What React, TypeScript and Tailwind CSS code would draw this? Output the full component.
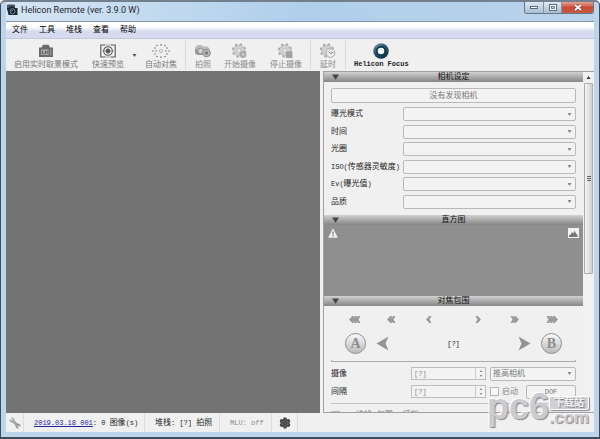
import React from 'react';
import { clsx } from 'clsx';
import { Settings } from 'lucide-react';

const CAMERA_SETTINGS = [
	'曝光模式',
	'时间',
	'光圈',
	'ISO(传感器灵敏度)',
	'Ev(曝光值)',
	'品质',
];

interface IconProps {
	className?: string;
}

// Latin letters are set one size below the Chinese ones
function Mixed({ children }: { children: string }) {
	return (
		<>
			{children.split(/([\x20-\x7e]+)/).map((part, i) =>
				i % 2 ? (
					<span key={i} className="text-[7px]">
						{part}
					</span>
				) : (
					part
				)
			)}
		</>
	);
}

function AppIcon() {
	return (
		<svg viewBox="0 0 12 12" className="size-3 shrink-0">
			<rect x="1" y="0.5" width="8" height="6" rx="1" fill="#46566a" />
			<path d="M1 4h2l1-1.5h4L9 4h2.500v7H2.500z" fill="#1b2633" />
			<circle cx="6.500" cy="7.200" r="2.500" fill="#0f1722" stroke="#8fa6bd" strokeWidth="0.800" />
			<circle cx="6" cy="6.700" r="0.800" fill="#7fa2c8" />
		</svg>
	);
}

function LiveViewIcon() {
	return (
		<svg viewBox="0 0 16 14" className="w-4 h-3.5">
			<path d="M1 3.500h2.500L5 .8h5.500L12 3.500h3V13H1z" fill="#6b6b6b" />
			<rect x="3" y="5.500" width="7.500" height="5.500" fill="#a9a9a9" />
			<path d="M4.500 7v2.500H6M7.500 7v3M9.300 7v2.500" stroke="#555" fill="none" />
			<rect x="12" y="5" width="1.500" height="6.500" fill="#8d8d8d" />
		</svg>
	);
}

function PreviewIcon() {
	return (
		<svg viewBox="0 0 16 14" className="w-4 h-3.5" fill="none" stroke="#555">
			<path d="M5 1H.8v12H5M11 1h4.200v12H11" strokeWidth="1.100" />
			<path d="M5 1h6M5 13h6" stroke="#aaa" />
			<circle cx="8" cy="7" r="4.300" strokeWidth="1.100" />
			<circle cx="8" cy="7" r="2.100" fill="#555" />
			<path d="M2.500 7h2M11.500 7h2" strokeWidth="0.600" />
		</svg>
	);
}

function AutoFocusIcon() {
	const dots = [
		[5, 1.5], [9, 0.900], [13, 1.500], [3, 4], [15, 4], [0.900, 7], [4, 7],
		[14, 7], [17.1, 7], [3, 10], [15, 10], [5, 12.5], [9, 13.100], [13, 12.5],
	];
	return (
		<svg viewBox="0 0 18 14" className="w-[18px] h-3.5">
			{dots.map(([x, y]) => (
				<circle key={`${x}-${y}`} cx={x} cy={y} r="0.800" fill="#777" />
			))}
			<circle cx="9" cy="7" r="1.600" fill="none" stroke="#aaa" strokeWidth="0.800" />
		</svg>
	);
}

function ShotIcon() {
	return (
		<svg viewBox="0 0 18 14" className="w-[18px] h-3.5">
			<path d="M1 3.500L3.500 1h4L9 2.500h4.500l2 2v4H1z" fill="#bbb" />
			<path d="M1 5h8v6H3L1 9z" fill="#9a9a9a" />
			<circle cx="6.500" cy="7" r="2.800" fill="#d4d4d4" stroke="#8d8d8d" />
			<circle cx="12.500" cy="9" r="3.800" fill="#bdbdbd" stroke="#8b8b8b" />
			<circle cx="12.500" cy="9" r="1.700" fill="#777" />
		</svg>
	);
}

function GearBadge({ kind }: { kind: 'play' | 'stop' | 'clock' }) {
	return (
		<svg viewBox="0 0 18 16" className="w-[18px] h-4">
			<circle
				cx="8"
				cy="7.500"
				r="6.300"
				fill="none"
				stroke="#aaa"
				strokeWidth="1.800"
				strokeDasharray="2.400 2.550"
			/>
			<circle cx="8" cy="7.500" r="5.400" fill="#d2d2d2" stroke="#adadad" strokeWidth="0.800" />
			<circle cx="8" cy="7.500" r="2.200" fill="#e4e4e4" stroke="#b8b8b8" strokeWidth="0.700" />
			{kind === 'play' && (
				<>
					<circle cx="12" cy="11.500" r="3.400" fill="#a9a9a9" />
					<path d="M11 9.600v3.800l3-1.900z" fill="#d0d0d0" />
				</>
			)}
			{kind === 'stop' && <rect x="9" y="8.500" width="6.500" height="6.500" rx="0.600" fill="#a3a3a3" />}
			{kind === 'clock' && (
				<>
					<circle cx="11.500" cy="10" r="4.400" fill="#ececec" stroke="#a8a8a8" />
					<path d="M9.500 8.500l2 2 2.500-1.300" fill="none" stroke="#777" />
				</>
			)}
		</svg>
	);
}

function FocusIcon() {
	return (
		<svg viewBox="0 0 18 18" className="size-4">
			<defs>
				<linearGradient id="lens" x1="0" y1="0" x2="0.600" y2="1">
					<stop offset="0" stopColor="#9db4c0" />
					<stop offset="0.350" stopColor="#3f6478" />
					<stop offset="1" stopColor="#0d3044" />
				</linearGradient>
			</defs>
			<circle cx="9" cy="9" r="8.700" fill="url(#lens)" />
			<circle cx="9" cy="9" r="5.600" fill="#123b50" />
			<circle cx="9" cy="9" r="3.700" fill="#f4f8fa" />
		</svg>
	);
}

function WrenchIcon() {
	return (
		<svg viewBox="0 0 12 12" className="size-3">
			<path d="M3.500 3.500l5 5" stroke="#a3a3a3" strokeWidth="2.600" />
			<circle cx="3" cy="3" r="2.500" fill="#a8a8a8" />
			<circle cx="9" cy="9" r="2.500" fill="#999" />
			<path d="M0 0l3 3M9 9l3 3" stroke="#f0f0f0" strokeWidth="1.600" />
		</svg>
	);
}

function DownArrow({ className }: IconProps) {
	return (
		<svg viewBox="0 0 8 6" className={clsx('shrink-0', className)} fill="currentColor">
			<path d="M0 0h8L4 6z" />
		</svg>
	);
}

interface ToolButtonProps {
	label: string;
	icon: React.ReactNode;
	className?: string;
}

const ToolButton: React.FC<ToolButtonProps> = ({ label, icon, className }) => {
	return (
		<button
			type="button"
			className={clsx(
				'flex flex-col items-center whitespace-nowrap',
				className ?? 'text-[#777]'
			)}
		>
			<span className="flex h-[18px] items-center">{icon}</span>
			<span className="leading-[9px]">{label}</span>
		</button>
	);
};

function ToolDivider() {
	return <div className="h-7 w-px bg-[#d8d8d8]" />;
}

function TitleBar() {
	return (
		<header className="flex h-[19px] shrink-0 items-start bg-linear-to-r from-[#d5e5f3] via-[#b0cfeb] to-[#b9d3ea]">
			<div className="flex h-4 flex-1 items-center gap-[3px]">
				<AppIcon />
				<h1 className="font-['Roboto','Noto_Sans',sans-serif] text-[9px] text-[#1c2530]">
					Helicon Remote (ver. 3.9.0 W)
				</h1>
			</div>
			<div className="flex h-3 overflow-hidden rounded-b-[3px] border border-t-0 border-[#64788d]">
				<button
					type="button"
					aria-label="Minimize"
					className="flex w-[19px] items-center justify-center border-r border-[#8193a8] bg-linear-to-b from-[#dfe9f3] to-[#a9bdd2]"
				>
					<svg viewBox="0 0 8 3" className="w-2 h-[3px]">
						<rect x="0.500" y="0.500" width="7" height="2" fill="#fff" stroke="#596b80" />
					</svg>
				</button>
				<button
					type="button"
					aria-label="Maximize"
					className="flex w-[18px] items-center justify-center border-r border-[#8193a8] bg-linear-to-b from-[#dfe9f3] to-[#a9bdd2]"
				>
					<svg viewBox="0 0 8 7" className="w-2 h-[7px]">
						<rect x="0.500" y="0.500" width="7" height="6" fill="#fff" stroke="#596b80" />
						<rect x="2.500" y="2.500" width="3" height="2" fill="#b9cbdc" stroke="#596b80" strokeWidth="0.800" />
					</svg>
				</button>
				<button
					type="button"
					aria-label="Close"
					className="flex w-[31px] items-center justify-center bg-linear-to-b from-[#e2a093] via-[#cb4a35] to-[#c55a43]"
				>
					<svg viewBox="0 0 8 7" className="w-2 h-[7px]">
						<path d="M1 1l6 5M7 1L1 6" stroke="#6b3a38" strokeWidth="2.800" />
						<path d="M1 1l6 5M7 1L1 6" stroke="#fff" strokeWidth="1.700" />
					</svg>
				</button>
			</div>
		</header>
	);
}

function MenuBar() {
	return (
		<nav className="flex h-[17px] shrink-0 items-center gap-[11px] border-b border-[#c4c8dc] bg-linear-to-b from-white from-30% to-[#d6daee] to-60% pl-1.5 text-black">
			{['文件', '工具', '堆栈', '查看', '帮助'].map((item) => (
				<button key={item} type="button">
					{item}
				</button>
			))}
		</nav>
	);
}

function Toolbar() {
	return (
		<div className="flex h-8 shrink-0 items-center bg-[#f0f0f0] pl-2">
			<ToolButton label="启用实时取景模式" icon={<LiveViewIcon />} />
			<ToolButton label="快速预览" icon={<PreviewIcon />} className="ml-3.5 text-[#777]" />
			<button type="button" aria-label="快速预览选项" className="ml-2 text-[#555]">
				<DownArrow className="w-[5px] h-[3px]" />
			</button>
			<ToolButton label="自动对焦" icon={<AutoFocusIcon />} className="mx-2 text-[#777]" />
			<ToolDivider />
			<ToolButton label="拍照" icon={<ShotIcon />} className="ml-2 text-[#888]" />
			<ToolButton label="开始摄像" icon={<GearBadge kind="play" />} className="ml-3 text-[#888]" />
			<ToolButton label="停止摄像" icon={<GearBadge kind="stop" />} className="ml-3.5 mr-2 text-[#888]" />
			<ToolDivider />
			<ToolButton label="延时" icon={<GearBadge kind="clock" />} className="mx-2 text-[#888]" />
			<ToolDivider />
			<ToolButton
				label="Helicon Focus"
				icon={<FocusIcon />}
				className="ml-2 text-[7px] font-bold text-[#222]"
			/>
		</div>
	);
}

function SectionHeader({ title }: { title: string }) {
	return (
		<button
			type="button"
			className="grid h-2.5 w-full shrink-0 grid-cols-[1fr_auto_1fr] items-center bg-linear-to-b from-[#d2d2d2] to-[#858585] px-2 text-[#111]"
		>
			<DownArrow className="h-1.5 w-[7px] text-[#444]" />
			<span className="leading-[10px]">{title}</span>
		</button>
	);
}

interface ComboProps {
	id?: string;
	label?: string;
	value?: string;
}

function Combo({ id, label, value = '' }: ComboProps) {
	return (
		<div className="grid flex-1 items-center">
			<select
				id={id}
				aria-label={label}
				className="col-start-1 row-start-1 h-3.5 w-full appearance-none rounded-[2px] border border-[#b9b9b9] bg-[#f3f3f3] px-0.5 text-[#777]"
			>
				<option>{value}</option>
			</select>
			<DownArrow className="pointer-events-none col-start-1 row-start-1 mr-1 h-[3px] w-[5px] justify-self-end text-[#888]" />
		</div>
	);
}

function CameraSection() {
	return (
		<div className="flex shrink-0 flex-col px-[7px] pt-1.5 pb-1.5">
			<button
				type="button"
				className="h-[15px] rounded-[2px] border border-[#b9b9b9] bg-[#f3f3f3] text-[#777]"
			>
				没有发现相机
			</button>
			<div className="mt-1 flex h-[102px] flex-col justify-between">
				{CAMERA_SETTINGS.map((name) => (
					<div key={name} className="flex items-center">
						<label htmlFor={name} className="w-[72px] whitespace-nowrap">
							<Mixed>{name}</Mixed>
						</label>
						<Combo id={name} />
					</div>
				))}
			</div>
		</div>
	);
}

function Histogram() {
	return (
		<div className="flex h-[71px] shrink-0 items-start justify-between bg-[#8f8f8f] px-1 pt-[3px]">
			<svg viewBox="0 0 10 10" className="size-2.5">
				<path d="M5 0.300L9.900 9.700H0.100z" fill="#efefef" />
				<path d="M5 3.500v3M5 7.300v1.200" stroke="#666" strokeWidth="1.100" />
			</svg>
			<svg viewBox="0 0 11 10" className="w-[11px] h-2.5">
				<rect width="11" height="10" fill="#f2f2f2" />
				<path d="M1 9V7.500l2-1.500 1-2 1.500 1.500 1-3 1.500 3L9.500 7v2z" fill="#777" />
			</svg>
		</div>
	);
}

function Chevrons({ count, back }: { count: number; back?: boolean }) {
	const width = 4 + count * 3;
	return (
		<button
			type="button"
			aria-label={`${back ? 'Back' : 'Forward'} ${count}`}
			className="flex w-3 items-center justify-center"
		>
			<svg
				viewBox={`0 0 ${width} 7`}
				style={{ width }}
				className={clsx('h-[7px] shrink-0', back && '-scale-x-100')}
				fill="#999"
			>
				{Array.from({ length: count }, (_, i) => (
					<path key={i} d="M0 0h2.200L5.500 3.500 2.200 7H0l2-3.500z" transform={`translate(${i * 3 + 0.500} 0)`} />
				))}
			</svg>
		</button>
	);
}

function RoundButton({ children }: { children: React.ReactNode }) {
	return (
		<button
			type="button"
			className="size-[21px] rounded-full border border-[#8e8e8e] bg-linear-to-b from-[#fafafa] to-[#bbb] text-center font-['Liberation_Serif',serif] text-[14px] leading-[19px] font-bold text-[#8c8c8c]"
		>
			{children}
		</button>
	);
}

function BigArrow({ back }: { back?: boolean }) {
	return (
		<button type="button" aria-label={back ? 'Step back' : 'Step forward'}>
			<svg viewBox="0 0 13 15" className={clsx('w-[13px] h-[15px]', back && '-scale-x-100')} fill="#949494">
				<path d="M0.500 0.500L12.500 7.500 0.500 14.500 3.500 7.500z" />
			</svg>
		</button>
	);
}

function SpinBox({ id }: { id: string }) {
	return (
		<div className="flex h-[13px] w-[75px] border border-[#bdbdbd] bg-[#f3f3f3]">
			<input
				id={id}
				defaultValue="[?]"
				className="w-0 flex-1 px-0.5 text-[7px] text-[#888]"
			/>
			<div className="flex w-2.5 flex-col items-center justify-center gap-[3px] border-l border-[#ccc] text-[#888]">
				<DownArrow className="h-0.5 w-1 rotate-180" />
				<DownArrow className="h-0.5 w-1" />
			</div>
		</div>
	);
}

function BracketingSection() {
	return (
		<div className="flex shrink-0 flex-col px-[7px] pt-2.5">
			<div className="flex justify-between pr-[18px] pl-[17px]">
				<div className="flex gap-[25px]">
					<Chevrons count={3} back />
					<Chevrons count={2} back />
					<Chevrons count={1} back />
				</div>
				<div className="flex gap-[25px]">
					<Chevrons count={1} />
					<Chevrons count={2} />
					<Chevrons count={3} />
				</div>
			</div>
			<div className="mt-2.5 flex items-center justify-between px-3.5">
				<div className="flex items-center gap-2.5">
					<RoundButton>A</RoundButton>
					<BigArrow back />
				</div>
				<span className="text-[7px]">[?]</span>
				<div className="flex items-center gap-2.5">
					<BigArrow />
					<RoundButton>B</RoundButton>
				</div>
			</div>
			<div className="mt-1.5 h-0.5 border-x border-b border-[#aaa]" />
			<div className="mt-1 flex h-[15px] items-center">
				<label htmlFor="shots" className="w-20">
					摄像
				</label>
				<SpinBox id="shots" />
				<div className="ml-1 flex flex-1">
					<Combo label="对焦方式" value="推高相机" />
				</div>
			</div>
			<div className="mt-[3px] flex h-[15px] items-center">
				<label htmlFor="interval" className="w-20">
					间隔
				</label>
				<SpinBox id="interval" />
				<label className="ml-1 flex flex-1 items-center gap-[3px] whitespace-nowrap text-[#888]">
					<input type="checkbox" className="size-[9px] appearance-none border border-[#b5b5b5] bg-[#f7f7f7]" />
					启动
				</label>
				<button
					type="button"
					className="h-3.5 w-[50px] rounded-[2px] border border-[#b9b9b9] bg-[#f3f3f3] text-[7px] text-[#777]"
				>
					DOF
				</button>
			</div>
			<div className="mt-1 h-px bg-[#c4c4c4]" />
			<label className="mt-1.5 flex items-center gap-4 text-[#888]">
				<input type="checkbox" className="size-[9px] appearance-none border border-[#b5b5b5] bg-[#f7f7f7]" />
				堆栈(包围) 模拟
			</label>
		</div>
	);
}

function ScrollBar() {
	return (
		<div className="flex w-[11px] shrink-0 flex-col items-center bg-[#f1f1f1]">
			<DownArrow className="my-1 h-[3px] w-[5px] shrink-0 rotate-180 text-[#333]" />
			<div className="flex h-[191px] w-[9px] flex-col items-center justify-center gap-px rounded-[1px] border border-[#ababab] bg-linear-to-r from-[#f6f6f6] to-[#cfcfd3]">
				<div className="h-px w-1 bg-[#666]" />
				<div className="h-px w-1 bg-[#666]" />
				<div className="h-px w-1 bg-[#666]" />
			</div>
		</div>
	);
}

function SidePanel() {
	return (
		<aside className="ml-[3px] flex w-[271px] shrink-0 overflow-hidden border border-r-0 border-[#a0a0a0] bg-[#f0f0f0]">
			<div className="flex min-w-0 flex-1 flex-col">
				<SectionHeader title="相机设定" />
				<CameraSection />
				<SectionHeader title="直方图" />
				<Histogram />
				<SectionHeader title="对焦包围" />
				<BracketingSection />
			</div>
			<ScrollBar />
		</aside>
	);
}

function StatusBar() {
	return (
		<footer className="flex h-[19px] shrink-0 items-center divide-x divide-[#dcdcdc] bg-[#f0f0f0] whitespace-pre *:flex *:h-full *:items-center">
			<div className="w-[18px] justify-center">
				<WrenchIcon />
			</div>
			<div className="w-[121px] pl-2.5">
				<a href="#session" className="text-[7px] text-[#22229c] underline">
					2019.03.18 001
				</a>
				<span>
					<Mixed>: 0 图像(s)</Mixed>
				</span>
			</div>
			<div className="w-[75px] pl-2.5">
				<span>
					<Mixed>堆栈: [?] 拍照</Mixed>
				</span>
			</div>
			<div className="w-[52px] pl-2.5 text-[7px] text-[#888]">MLU: off</div>
			<div className="w-[26px] justify-center">
				<Settings className="size-3 fill-[#666] text-[#444]" strokeWidth={3} />
			</div>
			<div className="w-5" />
		</footer>
	);
}

function Watermark() {
	return (
		<div className="pointer-events-none absolute right-2.5 bottom-3 flex items-end font-['Liberation_Sans','Noto_Sans_CJK_SC',sans-serif] font-bold text-[#cbcbd1] [text-shadow:1px_1px_1px_#85858c,-1px_-1px_0_#fff]">
			<span className="text-[36px] leading-9">pc6</span>
			<div className="flex flex-col items-end">
				<span className="rounded-[2px] border border-white bg-[#cfcfd4] px-1 text-[10px] leading-3 text-[#f4f4f6] shadow-[1px_1px_1px_#88888e] [text-shadow:1px_1px_1px_#77777d]">
					下载站
				</span>
				<span className="text-[17px] leading-[15px]">.com</span>
			</div>
		</div>
	);
}

export default function App() {
	return (
		<div className="relative flex h-screen flex-col overflow-hidden rounded-t-[5px] border border-t-2 border-b-2 border-[#3f4c5c] border-t-[#71808c] bg-[#bdd5eb] px-[5px] pb-[5px] font-['Liberation_Mono','Noto_Sans_CJK_SC',monospace] text-[8px] leading-[10px] text-[#222]">
			<TitleBar />
			<div className="flex min-h-0 flex-1 flex-col border-t border-[#8496a8]">
				<MenuBar />
				<Toolbar />
				<div className="flex min-h-0 flex-1 bg-[#f0f0f0]">
					<main className="flex-1 bg-[#737373]" />
					<SidePanel />
				</div>
				<StatusBar />
			</div>
			<Watermark />
		</div>
	);
}
